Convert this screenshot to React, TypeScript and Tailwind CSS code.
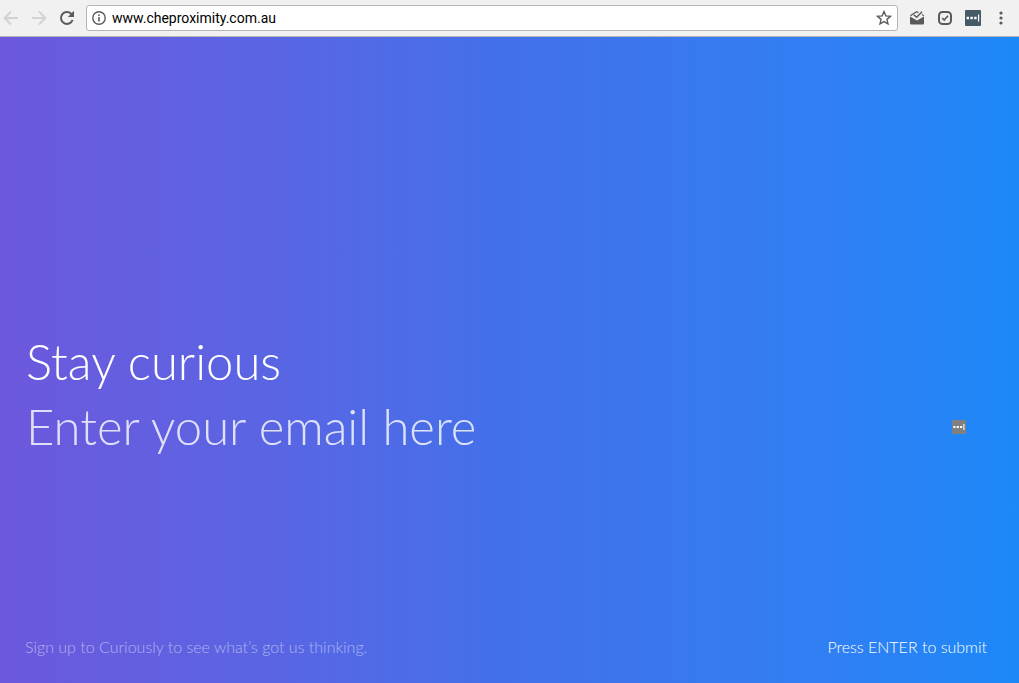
import { useState } from 'react';

function BackIcon() {
  return (
    <svg viewBox="0 0 16 16" className="size-4" fill="none" stroke="currentColor" strokeWidth="2" aria-hidden="true">
      <path d="M15 8H2M8 1.5L1.7 8L8 14.5" />
    </svg>
  );
}

function ForwardIcon() {
  return (
    <svg viewBox="0 0 16 16" className="size-4" fill="none" stroke="currentColor" strokeWidth="2" aria-hidden="true">
      <path d="M1 8H14M8 1.5L14.3 8L8 14.5" />
    </svg>
  );
}

function ReloadIcon() {
  return (
    <svg viewBox="0 0 16 16" className="size-4" aria-hidden="true">
      <path d="M13.6 10A6 6 0 1 1 12.2 3.7L14 5.5" fill="none" stroke="currentColor" strokeWidth="2" />
      <path d="M15 0.8V7H8.8Z" fill="currentColor" />
    </svg>
  );
}

function InfoIcon() {
  return (
    <svg viewBox="0 0 14 14" className="size-3.5" aria-hidden="true">
      <circle cx="7" cy="7" r="6.2" fill="none" stroke="currentColor" strokeWidth="1.4" />
      <path d="M6.2 3.4H7.8V5H6.2ZM6.2 6H7.8V10.6H6.2Z" fill="currentColor" />
    </svg>
  );
}

function StarIcon() {
  return (
    <svg viewBox="0 0 14 14" className="size-4" fill="none" stroke="currentColor" strokeWidth="1.2" aria-hidden="true">
      <path d="M7 1.4L8.6 5.1L12.7 5.5L9.6 8.2L10.5 12.2L7 10.1L3.5 12.2L4.4 8.2L1.3 5.5L5.4 5.1Z" />
    </svg>
  );
}

function InboxIcon() {
  return (
    <svg viewBox="0 0 16 16" className="size-4" aria-hidden="true">
      <path d="M1 6.4L8 10.6L15 6.4V13.2Q15 14.5 13.7 14.5H2.3Q1 14.5 1 13.2Z" fill="currentColor" />
      <path d="M1.3 5.8L7.6 1.8L9.4 2.6M14.7 5.8L13 4.4" fill="none" stroke="currentColor" strokeWidth="1.2" />
      <path d="M4.8 4.8L7.6 7.2L13 1.8" fill="none" stroke="currentColor" strokeWidth="1.4" />
    </svg>
  );
}

function CheckIcon() {
  return (
    <svg viewBox="0 0 16 16" className="size-4" fill="none" stroke="currentColor" aria-hidden="true">
      <rect x="2" y="2" width="12" height="12" rx="3.5" strokeWidth="2" />
      <path d="M5.2 8L7.2 10L11 5.8" strokeWidth="1.6" />
    </svg>
  );
}

function PasswordIcon({ className }: { className: string }) {
  return (
    <svg viewBox="0 0 16 16" className={className} aria-hidden="true">
      <rect width="16" height="16" rx="1" fill="currentColor" />
      <path d="M1.6 6.8H4V9.2H1.6ZM5.4 6.8H7.8V9.2H5.4ZM9.2 6.8H11.6V9.2H9.2ZM13 4.5H14.2V11.5H13Z" fill="white" />
    </svg>
  );
}

function MenuIcon() {
  return (
    <svg viewBox="0 0 4 16" className="h-4 w-1" fill="currentColor" aria-hidden="true">
      <circle cx="2" cy="3" r="1.6" />
      <circle cx="2" cy="8" r="1.6" />
      <circle cx="2" cy="13" r="1.6" />
    </svg>
  );
}

function Toolbar() {
  const [url, setUrl] = useState('www.cheproximity.com.au');

  return (
    <header className="flex h-[37px] items-center border-b border-[#b4b4b4] bg-[#f1f1f1] pr-4 pl-[3px] text-[#5a5a5a]">
      <nav className="flex items-center gap-3" aria-label="Browser">
        <button type="button" aria-label="Back" className="text-[#d2d2d2]">
          <BackIcon />
        </button>
        <button type="button" aria-label="Forward" className="text-[#d2d2d2]">
          <ForwardIcon />
        </button>
        <button type="button" aria-label="Reload">
          <ReloadIcon />
        </button>
      </nav>
      <div className="ml-[11px] flex h-[26px] flex-1 items-center rounded-[3px] border border-[#b6b6b6] bg-white px-[5px]">
        <button type="button" aria-label="Site information">
          <InfoIcon />
        </button>
        <input
          type="text"
          aria-label="Address"
          value={url}
          onChange={(e) => setUrl(e.target.value)}
          className="ml-1.5 min-w-0 flex-1 font-[Roboto,sans-serif] text-sm text-black outline-none"
        />
        <button type="button" aria-label="Bookmark this page">
          <StarIcon />
        </button>
      </div>
      <div className="ml-[11px] flex items-center gap-3">
        <button type="button" aria-label="Inbox">
          <InboxIcon />
        </button>
        <button type="button" aria-label="Tasks">
          <CheckIcon />
        </button>
        <button type="button" aria-label="Passwords" className="text-[#455a64]">
          <PasswordIcon className="size-4" />
        </button>
        <button type="button" aria-label="Menu" className="ml-1.5">
          <MenuIcon />
        </button>
      </div>
    </header>
  );
}

export default function App() {
  const [email, setEmail] = useState('');

  return (
    <div className="flex min-h-screen flex-col font-[Lato,sans-serif]">
      <Toolbar />
      <form
        onSubmit={(e) => e.preventDefault()}
        className="flex flex-1 flex-col justify-end bg-linear-to-r from-[#6c58dc] via-[#4270ea] to-[#1b88f8] font-light text-white"
      >
        <div className="px-[26px] pb-[175px] text-[49px]">
          <label htmlFor="email" className="block leading-[66px]">
            Stay curious
          </label>
          <div className="flex items-center pr-[27px]">
            <input
              id="email"
              type="email"
              value={email}
              onChange={(e) => setEmail(e.target.value)}
              placeholder="Enter your email here"
              className="h-[66px] min-w-0 flex-1 outline-none placeholder:text-white/80"
            />
            <button type="button" aria-label="Fill in email" className="text-[#808080]">
              <PasswordIcon className="size-3.5" />
            </button>
          </div>
        </div>
        <footer className="flex items-center justify-between pr-8 pb-6 pl-[25px] text-base">
          <p className="text-white/50">Sign up to Curiously to see what’s got us thinking.</p>
          <button type="submit">Press ENTER to submit</button>
        </footer>
      </form>
    </div>
  );
}
